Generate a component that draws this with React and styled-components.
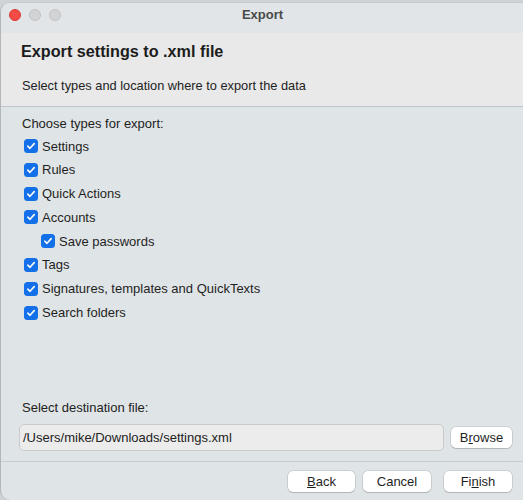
import React from 'react'
import styled, { createGlobalStyle } from 'styled-components'

const GlobalStyle = createGlobalStyle`
  html, body {
    margin: 0;
    padding: 0;
    background: #cfd3d6;
    overflow: hidden;
  }
  body {
    font-family: "Liberation Sans", Arial, sans-serif;
    font-size: 13px;
    color: #1f1f1f;
  }
`

const Window = styled.div`
  margin-top: 2px;
  width: 540px;
  height: 498px;
  display: flex;
  flex-direction: column;
  border-left: 1px solid #b4b7b9;
  border-top: 1px solid #c9ccce;
  border-radius: 10px 0 0 10px;
  overflow: hidden;
  background: #dfe4e6;
  box-sizing: border-box;
`

const TitleBar = styled.div`
  position: relative;
  height: 30px;
  flex: none;
  display: flex;
  align-items: flex-start;
  justify-content: center;
  background: #e1e5e7;
  width: 523px;
`

const Lights = styled.div`
  position: absolute;
  left: 8px;
  top: 6px;
  display: flex;
  gap: 8px;
`

const Light = styled.span`
  width: 12px;
  height: 12px;
  border-radius: 50%;
  box-sizing: border-box;
  background: ${p => (p.$red ? '#f34b45' : '#d1d3d5')};
  border: 1px solid ${p => (p.$red ? '#dc3a34' : '#c0c2c4')};
`

const WindowTitle = styled.div`
  font-weight: bold;
  font-size: 13px;
  color: #4a4a4a;
  margin-top: 4px;
`

const Header = styled.div`
  flex: none;
  height: 74px;
  box-sizing: border-box;
  background: #e9e9e9;
  border-bottom: 1px solid #bfc6cb;
  padding: 8px 0 0 20px;
`

const Heading = styled.div`
  font-size: 16.2px;
  font-weight: bold;
  color: #1c1c1c;
  line-height: 20px;
`

const Subtitle = styled.div`
  margin-top: 17px;
  margin-left: 1px;
  font-size: 12.8px;
  color: #222;
`

const Body = styled.div`
  flex: 1;
  display: flex;
  flex-direction: column;
  padding: 9px 0 10px 21px;
  width: 523px;
  box-sizing: border-box;
  border-bottom: 1px solid #c6cdd1;
`

const Label = styled.div`
  font-size: 13px;
  color: #222;
  line-height: 16px;
`

const List = styled.div`
  display: flex;
  flex-direction: column;
  margin-top: 6px;
  gap: 7.8px;
`

const Row = styled.label`
  display: flex;
  align-items: center;
  gap: 4px;
  height: 16px;
  padding-left: ${p => (p.$indent ? 19 : 2)}px;
  font-size: 13px;
  color: #1f1f1f;
`

const Box = styled.span`
  width: 14px;
  height: 14px;
  border-radius: 3.5px;
  background: #1470e8;
  display: flex;
  align-items: center;
  justify-content: center;
  flex: none;
`

const Spacer = styled.div`
  flex: 1;
`

const FileRow = styled.div`
  display: flex;
  align-items: center;
  gap: 7px;
  margin-top: 8px;
  margin-left: -3px;
`

const PathInput = styled.div`
  width: 425px;
  height: 27px;
  box-sizing: border-box;
  background: #ececec;
  border: 1px solid #c9cbcc;
  border-radius: 5px;
  display: flex;
  align-items: center;
  padding-left: 3px;
  font-size: 13px;
  color: #222;
`

const Button = styled.div`
  width: ${p => p.$w}px;
  height: 21px;
  box-sizing: border-box;
  margin-left: ${p => p.$push || 0}px;
  background: #ffffff;
  border-radius: 5px;
  box-shadow: 0 0 0 0.5px rgba(0, 0, 0, 0.18), 0 1px 1px rgba(0, 0, 0, 0.12);
  display: flex;
  align-items: center;
  justify-content: center;
  font-size: 13px;
  color: #1f1f1f;
`

const Footer = styled.div`
  flex: none;
  height: 38px;
  width: 523px;
  box-sizing: border-box;
  display: flex;
  justify-content: flex-end;
  align-items: flex-start;
  gap: 8px;
  padding: 9px 12px 0 0;
`

const Check = () => (
  <Box>
    <svg width="10" height="10" viewBox="0 0 10 10">
      <path d="M1.8 5.2 L4 7.3 L8.2 2.6" fill="none" stroke="#fff" strokeWidth="1.6" strokeLinecap="round" strokeLinejoin="round" />
    </svg>
  </Box>
)

const items = [
  { text: 'Settings' },
  { text: 'Rules' },
  { text: 'Quick Actions' },
  { text: 'Accounts' },
  { text: 'Save passwords', indent: true },
  { text: 'Tags' },
  { text: 'Signatures, templates and QuickTexts' },
  { text: 'Search folders' },
]

const App = () => (
  <>
    <GlobalStyle />
    <Window>
      <TitleBar>
        <Lights>
          <Light $red />
          <Light />
          <Light />
        </Lights>
        <WindowTitle>Export</WindowTitle>
      </TitleBar>
      <Header>
        <Heading>Export settings to .xml file</Heading>
        <Subtitle>Select types and location where to export the data</Subtitle>
      </Header>
      <Body>
        <Label>Choose types for export:</Label>
        <List>
          {items.map(it => (
            <Row key={it.text} $indent={it.indent}>
              <Check />
              {it.text}
            </Row>
          ))}
        </List>
        <Spacer />
        <Label>Select destination file:</Label>
        <FileRow>
          <PathInput>/Users/mike/Downloads/settings.xml</PathInput>
          <Button $w={61}>B<u>r</u>owse</Button>
        </FileRow>
      </Body>
      <Footer>
        <Button $w={67}><u>B</u>ack</Button>
        <Button $w={68}>Cancel</Button>
        <Button $w={68} $push={5}>Fi<u>n</u>ish</Button>
      </Footer>
    </Window>
  </>
)

export default App
